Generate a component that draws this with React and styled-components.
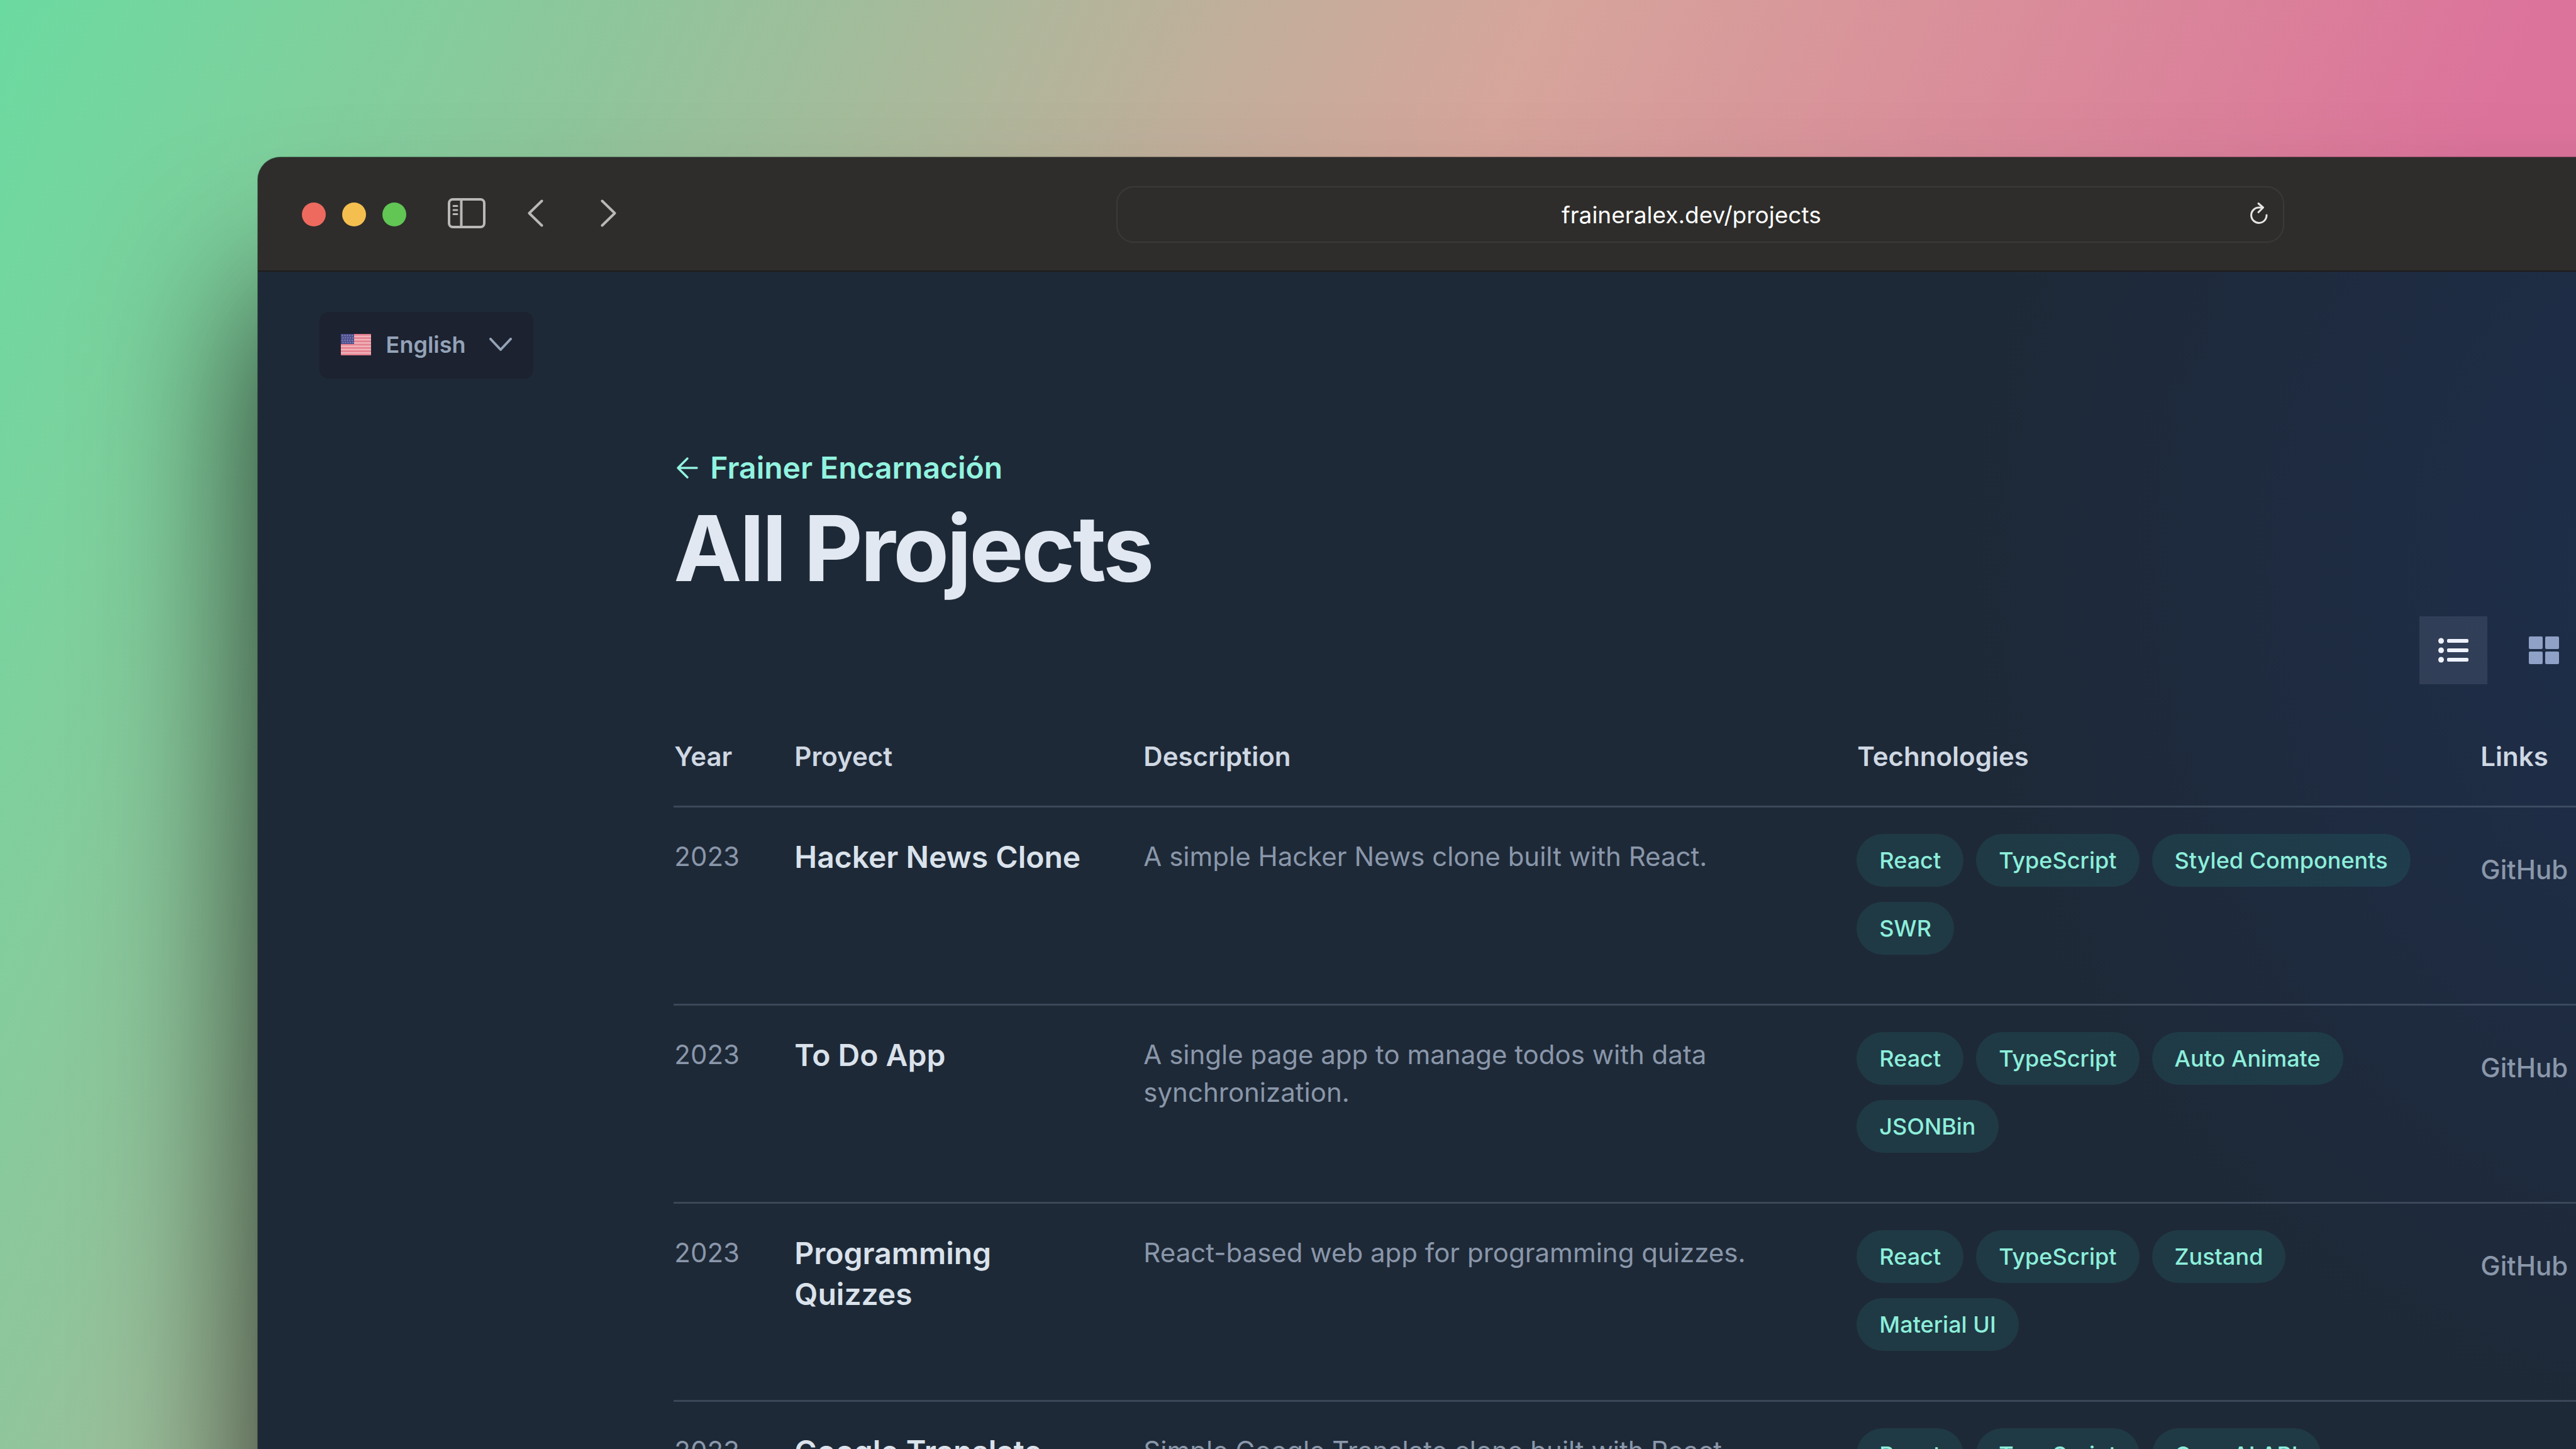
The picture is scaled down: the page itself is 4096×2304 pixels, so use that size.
import React from "react";
import styled, { createGlobalStyle } from "styled-components";

const GlobalStyle = createGlobalStyle`
  *, *::before, *::after { box-sizing: border-box; }
  body {
    margin: 0;
    font-family: Inter, "Liberation Sans", sans-serif;
    -webkit-font-smoothing: antialiased;
  }
  h1, ul { margin: 0; padding: 0; }
  button, input, select { font: inherit; }
`;

const Backdrop = styled.div`
  height: 100vh;
  padding-top: 250px;
  overflow: hidden;
  background: linear-gradient(
    114deg,
    #6bdaa0 0%,
    #7dd19d 10%,
    #90c59b 20%,
    #c4ad9b 40%,
    #d6a59b 48%,
    #d9919a 60%,
    #dc739b 79%
  );
`;

const BrowserWindow = styled.div`
  display: flex;
  flex-direction: column;
  width: 112%;
  min-height: 100%;
  margin-left: 10%;
  border-radius: 36px 36px 0 0;
  overflow: hidden;
  background: #1e2937;
  box-shadow: 0 0 0 1px rgba(0, 0, 0, 0.35), 0 220px 300px rgba(0, 0, 0, 0.75);
`;

const Toolbar = styled.header`
  display: grid;
  grid-template-columns: 1fr 41.75% 1fr;
  align-items: center;
  height: 182px;
  padding: 2px 70px 0;
  background: #2e2d2b;
  border-bottom: 2px solid #1d1c1b;
`;

const ToolbarGroup = styled.div`
  display: flex;
  align-items: center;
`;

const Lights = styled.div`
  display: flex;
  gap: 26px;
  margin-right: 66px;
`;

const Light = styled.button`
  width: 38px;
  height: 38px;
  padding: 0;
  border: 0;
  border-radius: 50%;
  background: ${(p) => p.$color};
`;

const BarButton = styled.button`
  display: flex;
  padding: 0 0 4px;
  border: 0;
  margin-right: ${(p) => p.$after || 0}px;
  background: none;
  color: ${(p) => (p.$bright ? "#e6e5e4" : "#b9b8b6")};
`;

const AddressBar = styled.div`
  display: flex;
  align-items: center;
  height: 90px;
  padding: 0 24px;
  border: 2px solid #3a3a38;
  border-radius: 28px;
`;

const AddressInput = styled.input`
  flex: 1;
  min-width: 0;
  padding: 0;
  border: 0;
  background: none;
  color: #ffffff;
  font-size: 37px;
  text-align: center;
`;

const Page = styled.div`
  flex: 1;
  background: radial-gradient(
    1800px at 4125px 480px,
    rgba(29, 78, 216, 0.15),
    transparent 80%
  );
`;

const LanguageRow = styled.div`
  display: flex;
  padding: 64px 98px 0;
`;

const LanguagePicker = styled.label`
  display: flex;
  align-items: center;
  gap: 24px;
  height: 106px;
  padding: 0 34px 2px;
  border-radius: 14px;
  background: #1c2230;
  color: #94a3b8;
`;

const LanguageSelect = styled.select`
  appearance: none;
  padding: 0 12px 0 0;
  border: 0;
  background: none;
  color: inherit;
  font-size: 36px;
  font-weight: 600;
`;

const Main = styled.main`
  max-width: 3840px;
  margin: 0 auto;
  padding: 102px 288px 0;
`;

const BackLink = styled.a`
  display: flex;
  align-items: center;
  gap: 16px;
  color: #92f3df;
  font-size: 48px;
  font-weight: 600;
  line-height: 80px;
  text-decoration: none;
`;

const Title = styled.h1`
  color: #e2e8f2;
  font-size: 145px;
  font-weight: 700;
  line-height: 176px;
  letter-spacing: -0.025em;
`;

const ViewSwitch = styled.div`
  display: flex;
  justify-content: flex-end;
  gap: 36px;
  margin-top: 20px;
  padding-right: 236px;
`;

const ViewButton = styled.button`
  display: flex;
  align-items: center;
  justify-content: center;
  width: 108px;
  height: 108px;
  padding: 0;
  border: 0;
  background: ${(p) => (p.$active ? "rgba(148, 163, 184, 0.16)" : "none")};
  color: ${(p) => (p.$active ? "#eef2ff" : "#8fa1c6")};
`;

const Table = styled.table`
  width: 100%;
  margin-top: 37px;
  border-spacing: 0;
  table-layout: fixed;
  text-align: left;
`;

const Column = styled.col`
  width: ${(p) => p.$width};
`;

const HeadCell = styled.th`
  padding: 48px 48px 48px 1px;
  border-bottom: 3px solid rgba(148, 163, 184, 0.25);
  color: #cfd8e3;
  font-size: 42px;
  font-weight: 600;
  line-height: 60px;
`;

const Cell = styled.td`
  padding: 48px 48px 48px 1px;
  border-bottom: 3px solid rgba(148, 163, 184, 0.25);
  vertical-align: top;
  color: #8a97aa;
  font-size: 42px;
  line-height: 60px;
`;

const NameCell = styled(Cell)`
  padding-top: 46px;
  color: #dae2eb;
  font-size: 48px;
  font-weight: 600;
  line-height: 65px;
`;

const TechCell = styled(Cell)`
  padding: 42px 48px 78px 0;
`;

const LinkCell = styled(Cell)`
  padding-top: 69px;
`;

const SourceLink = styled.a`
  color: inherit;
  font-weight: 500;
  text-decoration: none;
`;

const TagList = styled.ul`
  display: flex;
  flex-wrap: wrap;
  gap: 24px 20px;
  list-style: none;
`;

const Tag = styled.li`
  padding: 12px 36px;
  border-radius: 42px;
  background: rgba(45, 212, 191, 0.1);
  color: #8deedb;
  font-size: 36px;
  font-weight: 500;
  line-height: 60px;
`;

const SidebarIcon = () => (
  <svg width="60" height="48" viewBox="0 0 60 48" fill="none" stroke="currentColor" aria-hidden="true">
    <rect x="2" y="2" width="56" height="44" rx="6" strokeWidth="4" />
    <path d="M21.500 2v44" strokeWidth="4" />
    <path d="M9 12.500h6M9 19h6M9 25.500h6" strokeWidth="3" strokeLinecap="round" />
  </svg>
);

const Chevron = ({ forward }) => (
  <svg width="25" height="44" viewBox="0 0 25 44" fill="none" stroke="currentColor" strokeWidth="4" strokeLinecap="round" strokeLinejoin="round" aria-hidden="true">
    <path d={forward ? "M2.500 2.500L22.500 22L2.500 41.500" : "M22.500 2.500L2.500 22L22.500 41.500"} />
  </svg>
);

const ReloadIcon = () => (
  <svg width="28" height="36" viewBox="0 0 28 36" fill="none" stroke="currentColor" strokeWidth="3" strokeLinecap="round" strokeLinejoin="round" aria-hidden="true">
    <path d="M26 21A12.200 12.200 0 1 1 13.800 9H20" />
    <path d="M13 2.500L20.500 9L13 16.500" />
  </svg>
);

const FlagIcon = () => (
  <svg width="48" height="34" viewBox="0 0 48 34" aria-hidden="true">
    <rect width="48" height="34" fill="#f0b4bb" />
    {[0, 1, 2, 3, 4, 5, 6].map((i) => (
      <rect key={i} y={i * 5.23} width="48" height="2.620" fill="#e67f8e" />
    ))}
    <rect width="21" height="16" fill="#4d4f8c" />
    {[0, 1, 2, 3].map((r) =>
      [0, 1, 2, 3, 4].map((c) => (
        <circle key={`${r}-${c}`} cx={2.5 + c * 3.9 + (r % 2)} cy={2.5 + r * 3.700} r="1" fill="#8f93c4" />
      ))
    )}
  </svg>
);

const DownIcon = () => (
  <svg width="36" height="22" viewBox="0 0 36 22" fill="none" stroke="currentColor" strokeWidth="4" strokeLinecap="round" strokeLinejoin="round" aria-hidden="true">
    <path d="M2 2L18 19L34 2" />
  </svg>
);

const ArrowLeftIcon = () => (
  <svg width="42" height="36" viewBox="0 0 42 36" fill="none" stroke="currentColor" strokeWidth="3.500" strokeLinecap="round" strokeLinejoin="round" aria-hidden="true">
    <path d="M37 18H8M22 3L7 18L22 33" />
  </svg>
);

const ListIcon = () => (
  <svg width="48" height="40" viewBox="0 0 48 40" fill="currentColor" aria-hidden="true">
    {[5, 20, 35].map((y) => (
      <g key={y}>
        <circle cx="4.500" cy={y} r="4.500" />
        <rect x="14" y={y - 3} width="34" height="6" rx="2" />
      </g>
    ))}
  </svg>
);

const GridIcon = () => (
  <svg width="48" height="44" viewBox="0 0 48 44" fill="currentColor" aria-hidden="true">
    <rect x="0" y="0" width="22" height="20" rx="2" />
    <rect x="26" y="0" width="22" height="20" rx="2" />
    <rect x="0" y="24" width="22" height="20" rx="2" />
    <rect x="26" y="24" width="22" height="20" rx="2" />
  </svg>
);

const projects = [
  {
    year: "2023",
    name: "Hacker News Clone",
    description: "A simple Hacker News clone built with React.",
    tags: ["React", "TypeScript", "Styled Components", "SWR"],
  },
  {
    year: "2023",
    name: "To Do App",
    description: "A single page app to manage todos with data synchronization.",
    tags: ["React", "TypeScript", "Auto Animate", "JSONBin"],
  },
  {
    year: "2023",
    name: "Programming Quizzes",
    description: "React-based web app for programming quizzes.",
    tags: ["React", "TypeScript", "Zustand", "Material UI"],
  },
  {
    year: "2023",
    name: "Google Translate",
    description: "Simple Google Translate clone built with React.",
    tags: ["React", "TypeScript", "OpenAI API"],
  },
];

export default function App() {
  return (
    <>
      <GlobalStyle />
      <Backdrop>
        <BrowserWindow>
          <Toolbar>
            <ToolbarGroup>
              <Lights>
                <Light $color="#ee6a5f" aria-label="Close" />
                <Light $color="#f5bf4f" aria-label="Minimize" />
                <Light $color="#61c654" aria-label="Zoom" />
              </Lights>
              <BarButton $after={67} aria-label="Toggle sidebar">
                <SidebarIcon />
              </BarButton>
              <BarButton $after={91} aria-label="Back">
                <Chevron />
              </BarButton>
              <BarButton aria-label="Forward">
                <Chevron forward />
              </BarButton>
            </ToolbarGroup>
            <AddressBar>
              <AddressInput aria-label="Address" defaultValue="fraineralex.dev/projects" />
              <BarButton $bright aria-label="Reload">
                <ReloadIcon />
              </BarButton>
            </AddressBar>
          </Toolbar>
          <Page>
            <LanguageRow>
              <LanguagePicker>
                <FlagIcon />
                <LanguageSelect aria-label="Language" defaultValue="en">
                  <option value="en">English</option>
                </LanguageSelect>
                <DownIcon />
              </LanguagePicker>
            </LanguageRow>
            <Main>
              <BackLink href="#home">
                <ArrowLeftIcon />
                Frainer Encarnación
              </BackLink>
              <Title>All Projects</Title>
              <ViewSwitch>
                <ViewButton $active aria-label="List view">
                  <ListIcon />
                </ViewButton>
                <ViewButton aria-label="Grid view">
                  <GridIcon />
                </ViewButton>
              </ViewSwitch>
              <Table>
                <colgroup>
                  <Column $width="191px" />
                  <Column $width="555px" />
                  <Column $width="1135px" />
                  <Column $width="991px" />
                  <Column />
                </colgroup>
                <thead>
                  <tr>
                    <HeadCell>Year</HeadCell>
                    <HeadCell>Proyect</HeadCell>
                    <HeadCell>Description</HeadCell>
                    <HeadCell>Technologies</HeadCell>
                    <HeadCell>Links</HeadCell>
                  </tr>
                </thead>
                <tbody>
                  {projects.map((project) => (
                    <tr key={project.name}>
                      <Cell>{project.year}</Cell>
                      <NameCell>{project.name}</NameCell>
                      <Cell>{project.description}</Cell>
                      <TechCell>
                        <TagList>
                          {project.tags.map((tag) => (
                            <Tag key={tag}>{tag}</Tag>
                          ))}
                        </TagList>
                      </TechCell>
                      <LinkCell>
                        <SourceLink href="#source">GitHub</SourceLink>
                      </LinkCell>
                    </tr>
                  ))}
                </tbody>
              </Table>
            </Main>
          </Page>
        </BrowserWindow>
      </Backdrop>
    </>
  );
}
